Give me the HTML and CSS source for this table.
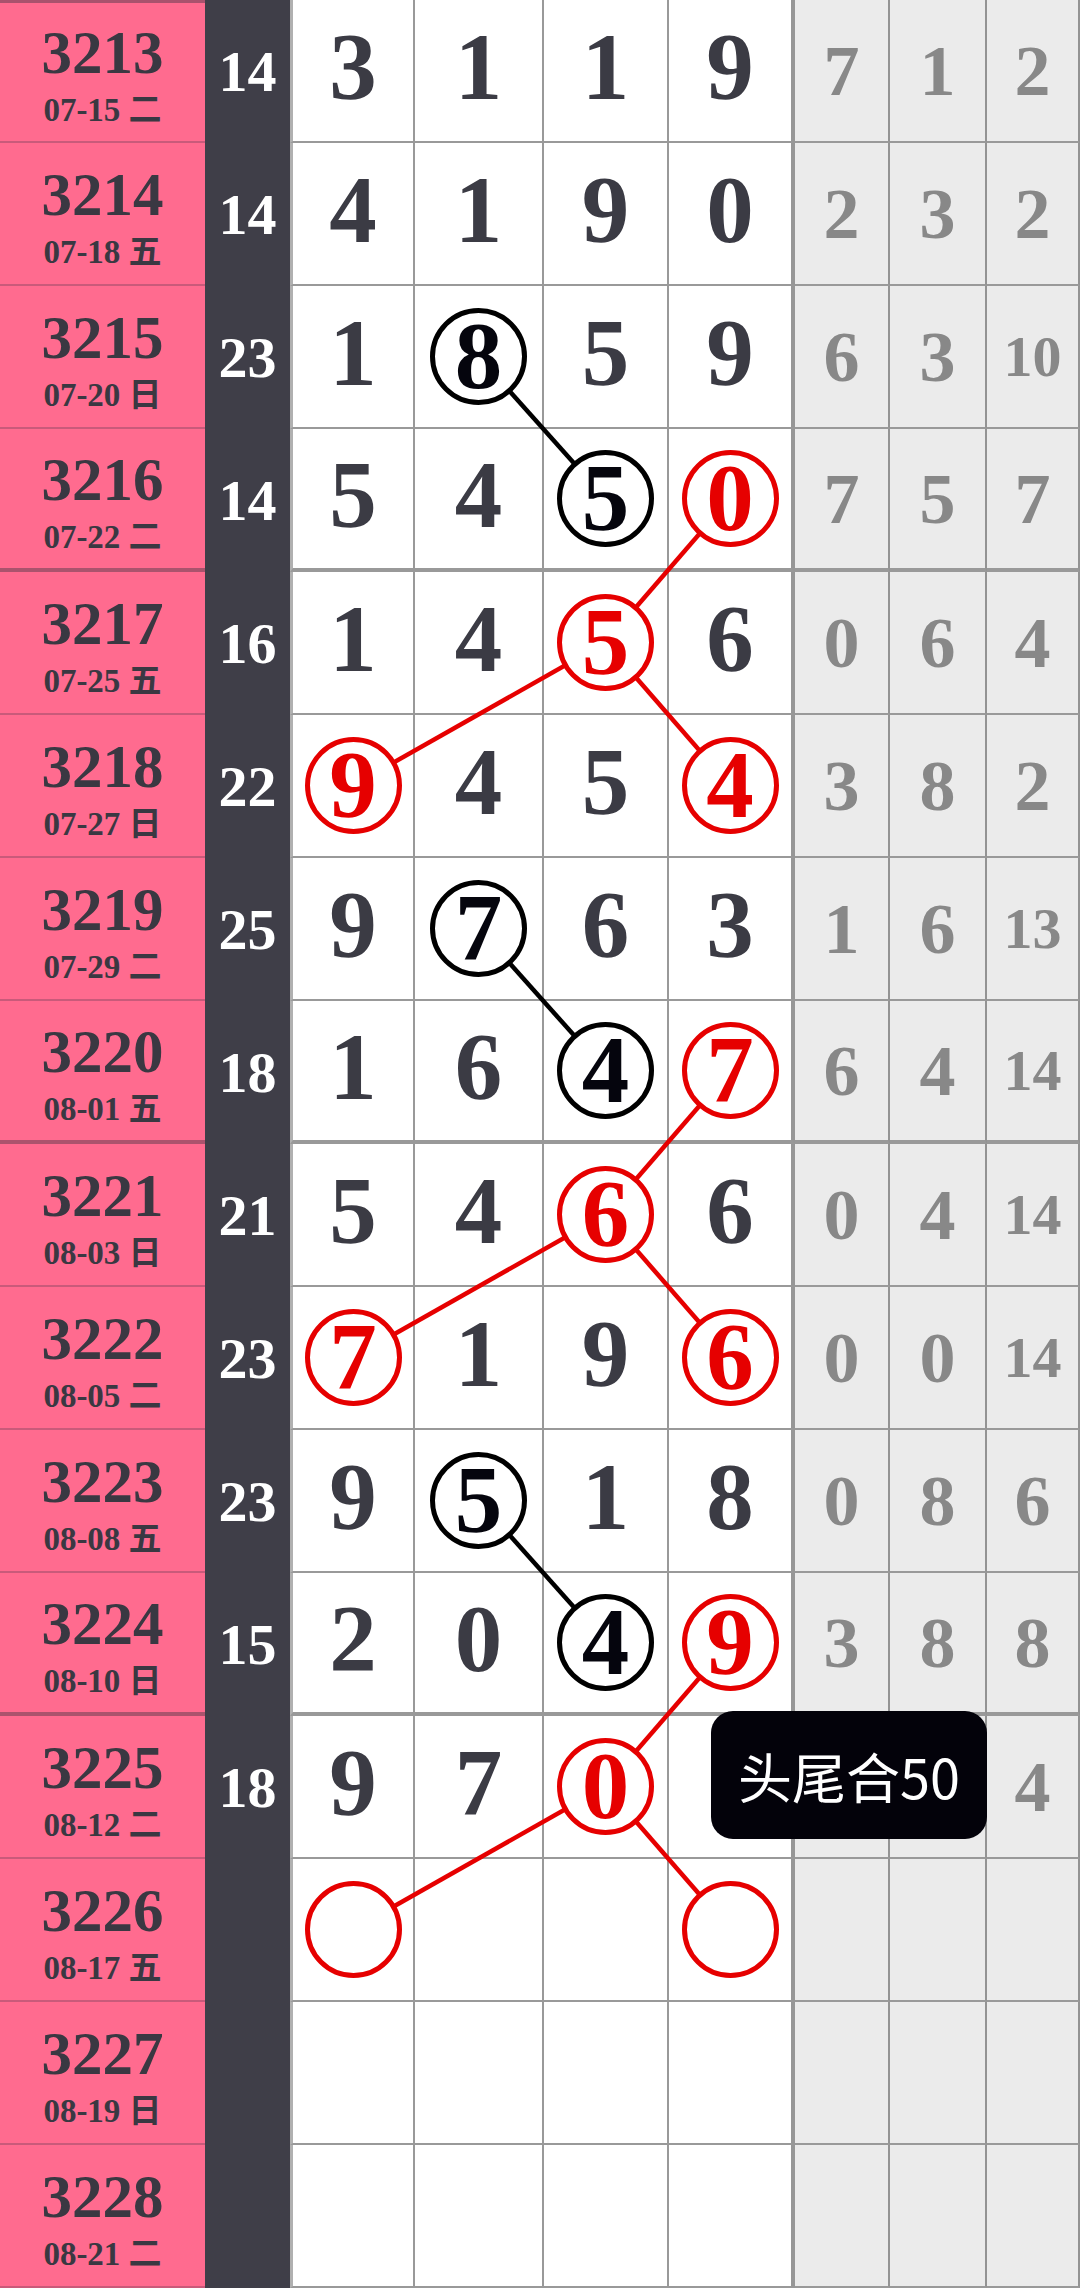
FILE: index.html
```html
<!DOCTYPE html>
<html lang="zh">
<head>
<meta charset="utf-8">
<title>走势图</title>
<link rel="stylesheet" href="styles.css">
</head>
<body>
<div class="board">
  <div class="row first">
    <div class="cell id"><span class="num">3213</span><span class="date">07-15 二</span></div>
    <div class="cell sum">14</div>
    <div class="cell d d1">3</div><div class="cell d">1</div><div class="cell d">1</div><div class="cell d d4">9</div>
    <div class="cell g">7</div><div class="cell g">1</div><div class="cell g">2</div>
  </div>
  <div class="row">
    <div class="cell id"><span class="num">3214</span><span class="date">07-18 五</span></div>
    <div class="cell sum">14</div>
    <div class="cell d d1">4</div><div class="cell d">1</div><div class="cell d">9</div><div class="cell d d4">0</div>
    <div class="cell g">2</div><div class="cell g">3</div><div class="cell g">2</div>
  </div>
  <div class="row">
    <div class="cell id"><span class="num">3215</span><span class="date">07-20 日</span></div>
    <div class="cell sum">23</div>
    <div class="cell d d1">1</div><div class="cell d"><span class="ring k">8</span></div><div class="cell d">5</div><div class="cell d d4">9</div>
    <div class="cell g">6</div><div class="cell g">3</div><div class="cell g two">10</div>
  </div>
  <div class="row sep">
    <div class="cell id"><span class="num">3216</span><span class="date">07-22 二</span></div>
    <div class="cell sum">14</div>
    <div class="cell d d1">5</div><div class="cell d">4</div><div class="cell d"><span class="ring k">5</span></div><div class="cell d d4"><span class="ring r">0</span></div>
    <div class="cell g">7</div><div class="cell g">5</div><div class="cell g">7</div>
  </div>
  <div class="row">
    <div class="cell id"><span class="num">3217</span><span class="date">07-25 五</span></div>
    <div class="cell sum">16</div>
    <div class="cell d d1">1</div><div class="cell d">4</div><div class="cell d"><span class="ring r">5</span></div><div class="cell d d4">6</div>
    <div class="cell g">0</div><div class="cell g">6</div><div class="cell g">4</div>
  </div>
  <div class="row">
    <div class="cell id"><span class="num">3218</span><span class="date">07-27 日</span></div>
    <div class="cell sum">22</div>
    <div class="cell d d1"><span class="ring r">9</span></div><div class="cell d">4</div><div class="cell d">5</div><div class="cell d d4"><span class="ring r">4</span></div>
    <div class="cell g">3</div><div class="cell g">8</div><div class="cell g">2</div>
  </div>
  <div class="row">
    <div class="cell id"><span class="num">3219</span><span class="date">07-29 二</span></div>
    <div class="cell sum">25</div>
    <div class="cell d d1">9</div><div class="cell d"><span class="ring k">7</span></div><div class="cell d">6</div><div class="cell d d4">3</div>
    <div class="cell g">1</div><div class="cell g">6</div><div class="cell g two">13</div>
  </div>
  <div class="row sep">
    <div class="cell id"><span class="num">3220</span><span class="date">08-01 五</span></div>
    <div class="cell sum">18</div>
    <div class="cell d d1">1</div><div class="cell d">6</div><div class="cell d"><span class="ring k">4</span></div><div class="cell d d4"><span class="ring r">7</span></div>
    <div class="cell g">6</div><div class="cell g">4</div><div class="cell g two">14</div>
  </div>
  <div class="row">
    <div class="cell id"><span class="num">3221</span><span class="date">08-03 日</span></div>
    <div class="cell sum">21</div>
    <div class="cell d d1">5</div><div class="cell d">4</div><div class="cell d"><span class="ring r">6</span></div><div class="cell d d4">6</div>
    <div class="cell g">0</div><div class="cell g">4</div><div class="cell g two">14</div>
  </div>
  <div class="row">
    <div class="cell id"><span class="num">3222</span><span class="date">08-05 二</span></div>
    <div class="cell sum">23</div>
    <div class="cell d d1"><span class="ring r">7</span></div><div class="cell d">1</div><div class="cell d">9</div><div class="cell d d4"><span class="ring r">6</span></div>
    <div class="cell g">0</div><div class="cell g">0</div><div class="cell g two">14</div>
  </div>
  <div class="row">
    <div class="cell id"><span class="num">3223</span><span class="date">08-08 五</span></div>
    <div class="cell sum">23</div>
    <div class="cell d d1">9</div><div class="cell d"><span class="ring k">5</span></div><div class="cell d">1</div><div class="cell d d4">8</div>
    <div class="cell g">0</div><div class="cell g">8</div><div class="cell g">6</div>
  </div>
  <div class="row sep">
    <div class="cell id"><span class="num">3224</span><span class="date">08-10 日</span></div>
    <div class="cell sum">15</div>
    <div class="cell d d1">2</div><div class="cell d">0</div><div class="cell d"><span class="ring k">4</span></div><div class="cell d d4"><span class="ring r">9</span></div>
    <div class="cell g">3</div><div class="cell g">8</div><div class="cell g">8</div>
  </div>
  <div class="row">
    <div class="cell id"><span class="num">3225</span><span class="date">08-12 二</span></div>
    <div class="cell sum">18</div>
    <div class="cell d d1">9</div><div class="cell d">7</div><div class="cell d"><span class="ring r">0</span></div><div class="cell d d4"></div>
    <div class="cell g"></div><div class="cell g"></div><div class="cell g">4</div>
  </div>
  <div class="row">
    <div class="cell id"><span class="num">3226</span><span class="date">08-17 五</span></div>
    <div class="cell sum"></div>
    <div class="cell d d1"><span class="ring r"></span></div><div class="cell d"></div><div class="cell d"></div><div class="cell d d4"><span class="ring r"></span></div>
    <div class="cell g"></div><div class="cell g"></div><div class="cell g"></div>
  </div>
  <div class="row">
    <div class="cell id"><span class="num">3227</span><span class="date">08-19 日</span></div>
    <div class="cell sum"></div>
    <div class="cell d d1"></div><div class="cell d"></div><div class="cell d"></div><div class="cell d d4"></div>
    <div class="cell g"></div><div class="cell g"></div><div class="cell g"></div>
  </div>
  <div class="row">
    <div class="cell id"><span class="num">3228</span><span class="date">08-21 二</span></div>
    <div class="cell sum"></div>
    <div class="cell d d1"></div><div class="cell d"></div><div class="cell d"></div><div class="cell d d4"></div>
    <div class="cell g"></div><div class="cell g"></div><div class="cell g"></div>
  </div>

  <svg class="links" width="1080" height="2288" viewBox="0 0 1080 2288" aria-hidden="true">
    <g class="lk">
      <line x1="478.5" y1="356.5" x2="605.5" y2="498.5"/>
      <line x1="478.5" y1="928.5" x2="605.5" y2="1070.5"/>
      <line x1="478.5" y1="1500.5" x2="605.5" y2="1642.5"/>
    </g>
    <g class="lr">
      <line x1="730" y1="498.5" x2="605.5" y2="642.5"/>
      <line x1="605.5" y1="642.5" x2="353" y2="785.5"/>
      <line x1="605.5" y1="642.5" x2="730" y2="785.5"/>
      <line x1="730" y1="1070.5" x2="605.5" y2="1214.5"/>
      <line x1="605.5" y1="1214.5" x2="353" y2="1357.5"/>
      <line x1="605.5" y1="1214.5" x2="730" y2="1357.5"/>
      <line x1="730" y1="1642.5" x2="605.5" y2="1786.5"/>
      <line x1="605.5" y1="1786.5" x2="353" y2="1929.5"/>
      <line x1="605.5" y1="1786.5" x2="730" y2="1929.5"/>
    </g>
  </svg>

  <div class="tip">头尾合50</div>
</div>
</body>
</html>
```

FILE: styles.css
```css
* { box-sizing: border-box; margin: 0; padding: 0; }
html, body { background: #ffffff; }
body {
  width: 1080px;
  height: 2289px;
  overflow: hidden;
  font-family: "Liberation Serif", "Noto Sans CJK SC", serif;
}
.board { position: relative; width: 1080px; }
.row {
  display: grid;
  grid-template-columns: 205px 85px 125px 129px 125px 126px 95px 97px 93px;
  height: 143px;
}
.cell {
  display: flex;
  align-items: center;
  justify-content: center;
  font-weight: 700;
  line-height: 1;
}
.id {
  flex-direction: column;
  gap: 11px;
  padding-top: 5px;
  background: #ff6b8f;
  color: #3a3842;
  border-bottom: 2px solid #c95a7a;
}
.row.first .id { border-top: 3px solid #a9526d; }
.row.sep .id { border-bottom: 4px solid #ab536d; }
.num { font-size: 61px; }
.date { font-size: 33px; }
.sum {
  background: #3f3e48;
  color: #ffffff;
  font-size: 58px;
}
.d {
  background: #ffffff;
  color: #3b3b44;
  font-size: 95px;
  padding-bottom: 6px;
  border-right: 2px solid #999999;
  border-bottom: 2px solid #999999;
}
.d1 { border-left: 3px solid #b0b0b0; }
.d4 { border-right: 4px solid #979797; }
.g {
  background: #ebebeb;
  color: #888888;
  font-size: 72px;
  border-right: 2px solid #939393;
  border-bottom: 2px solid #999999;
}
.g.two { font-size: 58px; }
.row.sep .d, .row.sep .g { border-bottom-width: 4px; }
.ring {
  position: relative;
  z-index: 2;
  width: 97px;
  height: 97px;
  margin-bottom: -6px;
  border: 5px solid #000000;
  border-radius: 50%;
  background: #ffffff;
  color: #05050d;
  display: flex;
  align-items: center;
  justify-content: center;
}
.ring.r { border-color: #e60000; color: #e60000; }
.links {
  position: absolute;
  left: 0;
  top: 0;
  z-index: 1;
  pointer-events: none;
}
.lk line { stroke: #000000; stroke-width: 4.5; }
.lr line { stroke: #e60000; stroke-width: 4.5; }
.tip {
  position: absolute;
  left: 711px;
  top: 1711px;
  z-index: 3;
  width: 276px;
  height: 128px;
  border-radius: 22px;
  background: #03020a;
  color: #ffffff;
  font-family: "Noto Sans CJK SC", sans-serif;
  font-size: 54px;
  font-weight: 400;
  display: flex;
  align-items: center;
  justify-content: center;
}
```
